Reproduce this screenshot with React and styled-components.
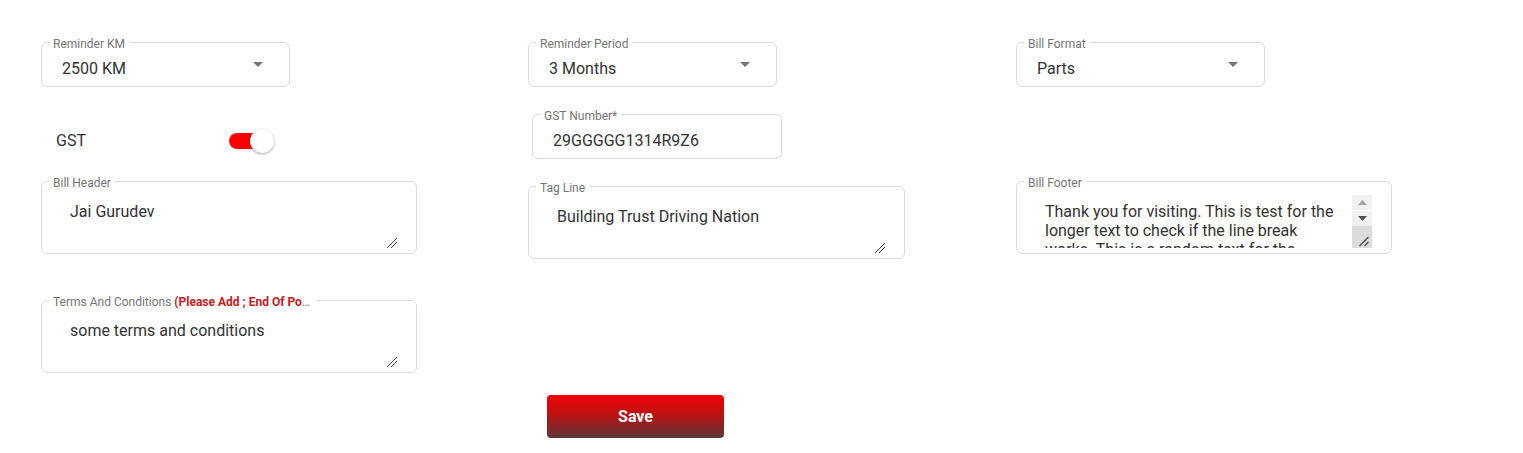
import React from 'react';
import styled, { createGlobalStyle } from 'styled-components';

const GlobalStyle = createGlobalStyle`
  html, body {
    margin: 0;
    padding: 0;
    background: #fff;
  }
  body {
    font-family: Roboto, "Liberation Sans", Arial, sans-serif;
    color: #333;
  }
`;

const Page = styled.div`
  display: flex;
  flex-direction: column;
  padding: 34px 0 0 41px;
`;

const Row = styled.div`
  display: grid;
  grid-template-columns: 487px 488px 487px;
  align-items: start;
  margin-top: ${p => p.$gap || 0}px;
`;

const Field = styled.fieldset`
  box-sizing: border-box;
  display: flex;
  flex-direction: column;
  min-width: 0;
  width: ${p => p.$width}px;
  height: ${p => p.$height}px;
  margin: ${p => p.$top || 0}px 0 0 ${p => p.$left || 0}px;
  padding: 0;
  border: 1px solid #dadada;
  border-radius: 6px;
`;

const Legend = styled.legend`
  margin-left: 7px;
  padding: 4px 4px 0;
  max-width: 259px;
  font-size: 12px;
  line-height: 13px;
  color: #757575;
  white-space: nowrap;
  overflow: hidden;
  text-overflow: ellipsis;
`;

const Hint = styled.span`
  color: #c62020;
  font-weight: 700;
`;

const SelectBody = styled.div`
  flex: 1;
  display: flex;
  align-items: center;
  padding: 0 19px 0 20px;
  cursor: pointer;
`;

const Value = styled.span`
  flex: 1;
  font-size: 16px;
  line-height: 19px;
  color: #333;
`;

const Caret = styled.svg`
  width: 24px;
  height: 24px;
  margin-bottom: 10px;
  fill: #757575;
`;

const InputBody = styled.div`
  flex: 1;
  display: flex;
  align-items: center;
  padding: 0 20px;
`;

const TextBody = styled.div`
  display: flex;
  padding: 5px 19px 0 14px;
`;

const Area = styled.textarea`
  box-sizing: border-box;
  display: block;
  flex: 1;
  min-width: 0;
  height: 53px;
  margin: 0;
  padding: 7px 14px 0;
  border: none;
  outline: none;
  font-family: inherit;
  font-size: 16px;
  line-height: 1.2;
  color: #333;
  background: transparent;
  overflow: hidden;
  resize: ${p => (p.$fixed ? 'none' : 'both')};

  &::-webkit-resizer {
    background-color: transparent;
    background-image: linear-gradient(
      135deg,
      transparent 0 64%,
      #444 64% 69%,
      transparent 69% 77%,
      #444 77% 82%,
      transparent 82%
    );
  }
`;

const ScrollRail = styled.div`
  display: flex;
  flex-direction: column;
  width: 20px;
  height: 53px;
  background: #f1f1f1;
`;

const ScrollButton = styled.div`
  display: flex;
  align-items: center;
  justify-content: center;
  height: 15px;
  border-bottom: ${p => (p.$divider ? '1px solid #fbfbfb' : 'none')};

  svg {
    width: 9px;
    height: 5px;
    fill: ${p => p.$color};
  }
`;

const Corner = styled.div`
  flex: 1;
  background: #dcdcdc;

  svg {
    display: block;
    width: 20px;
    height: 22px;
  }
`;

const ToggleRow = styled.div`
  display: flex;
  align-items: center;
  height: 22px;
  padding: 23px 0 0 15px;
`;

const ToggleLabel = styled.span`
  width: 173px;
  font-size: 16px;
  color: #333;
`;

const Track = styled.span`
  position: relative;
  display: block;
  width: 36px;
  height: 16px;
  margin-top: 1px;
  border-radius: 8px;
  background: #ff0000;
`;

const Thumb = styled.span`
  position: absolute;
  left: 21px;
  top: -4px;
  width: 24px;
  height: 24px;
  border-radius: 50%;
  background: #fff;
  box-shadow: 0 1px 3px rgba(0, 0, 0, 0.35);
`;

const SaveButton = styled.button`
  grid-column: 2;
  width: 177px;
  height: 43px;
  margin-left: 19px;
  border: none;
  border-radius: 4px;
  background: linear-gradient(to bottom, #f40000 0%, #b51414 50%, #5c3838 100%);
  color: #fff;
  font-family: inherit;
  font-size: 16px;
  font-weight: 700;
  cursor: pointer;
`;

const SelectField = ({ label, value }) => (
  <Field $width={249} $height={53}>
    <Legend>{label}</Legend>
    <SelectBody>
      <Value>{value}</Value>
      <Caret viewBox="0 0 24 24">
        <path d="M7 10l5 5 5-5z" />
      </Caret>
    </SelectBody>
  </Field>
);

const Scrollbar = () => (
  <ScrollRail>
    <ScrollButton $color="#a3a3a3" $divider>
      <svg viewBox="0 0 9 5">
        <path d="M0 5L4.5 0 9 5z" />
      </svg>
    </ScrollButton>
    <ScrollButton $color="#505050">
      <svg viewBox="0 0 9 5">
        <path d="M0 0h9L4.5 5z" />
      </svg>
    </ScrollButton>
    <Corner>
      <svg viewBox="0 0 20 22">
        <path d="M7.5 20L16.5 11M12.5 20L16.5 16" stroke="#4a4a4a" strokeWidth="1.3" fill="none" />
      </svg>
    </Corner>
  </ScrollRail>
);

const AreaField = ({ label, value, width = 376, top, scroll }) => (
  <Field $width={width} $height={81} $top={top}>
    <Legend>{label}</Legend>
    <TextBody>
      <Area defaultValue={value} $fixed={scroll} />
      {scroll && <Scrollbar />}
    </TextBody>
  </Field>
);

export default function App() {
  return (
    <>
      <GlobalStyle />
      <Page>
        <Row>
          <SelectField label="Reminder KM" value="2500 KM" />
          <SelectField label="Reminder Period" value="3 Months" />
          <SelectField label="Bill Format" value="Parts" />
        </Row>

        <Row $gap={19}>
          <ToggleRow>
            <ToggleLabel>GST</ToggleLabel>
            <Track>
              <Thumb />
            </Track>
          </ToggleRow>
          <Field $width={250} $height={53} $left={4}>
            <Legend>GST Number*</Legend>
            <InputBody>
              <Value>29GGGGG1314R9Z6</Value>
            </InputBody>
          </Field>
        </Row>

        <Row $gap={14}>
          <AreaField label="Bill Header" value="Jai Gurudev" />
          <AreaField label="Tag Line" value="Building Trust Driving Nation" width={377} top={5} />
          <AreaField
            label="Bill Footer"
            scroll
            value="Thank you for visiting. This is test for the longer text to check if the line break works. This is a random text for the testing purpose."
          />
        </Row>

        <Row $gap={33}>
          <AreaField
            label={
              <>
                Terms And Conditions <Hint>(Please Add ; End Of Point)</Hint>
              </>
            }
            value="some terms and conditions"
          />
        </Row>

        <Row $gap={22}>
          <SaveButton>Save</SaveButton>
        </Row>
      </Page>
    </>
  );
}
